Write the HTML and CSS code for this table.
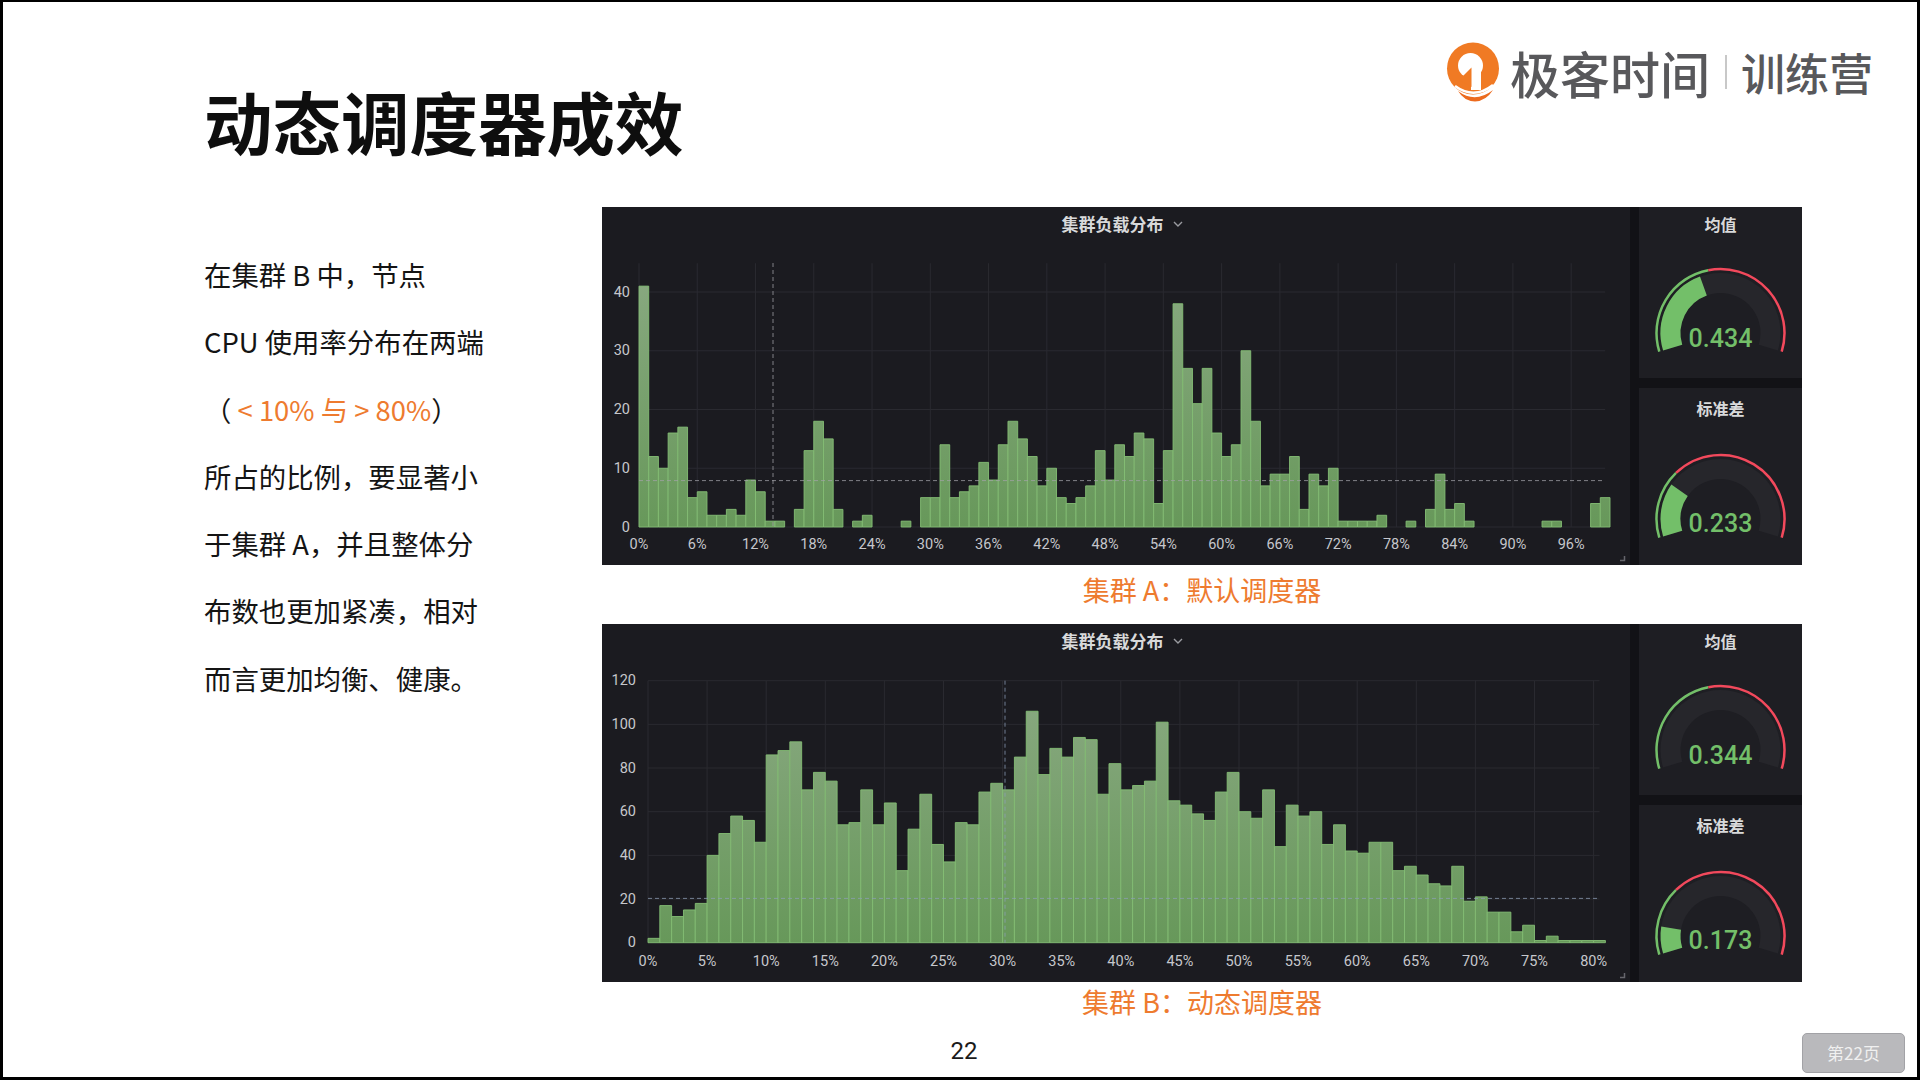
FILE: index.html
```html
<!DOCTYPE html>
<html lang="zh-CN">
<head>
<meta charset="utf-8">
<title>动态调度器成效</title>
<link rel="stylesheet" href="styles.css">
</head>
<body>
<div class="page">
  <header class="header">
    <h1 class="title">动态调度器成效</h1>
    <div class="logo">
      <svg class="logo-icon" width="54" height="60" viewBox="0 0 54 60">
        <path d="M13 49 Q30 62 48 48 Q41 59 30 59.5 Q19 59 13 49 Z" fill="#ec6b1e"/>
        <circle cx="28" cy="26.5" r="26" fill="#f07a24"/>
        <path d="M10 44 Q29 58 48 43" fill="none" stroke="#fff" stroke-width="2.6"/>
        <circle cx="25.5" cy="23.5" r="12.5" fill="#fff"/>
        <rect x="26" y="24" width="10" height="24" fill="#fff"/>
        <polygon points="14,38 26.5,25.5 26.5,45" fill="#f07a24"/>
      </svg>
      <span class="logo-name">极客时间</span>
      <span class="logo-sep"></span>
      <span class="logo-sub">训练营</span>
    </div>
  </header>

  <main class="content">
    <div class="desc">
      <p>在集群 B 中，节点</p>
      <p>CPU 使用率分布在两端</p>
      <p>（<span class="hl"> &lt; 10% 与 &gt; 80%</span>）</p>
      <p>所占的比例，要显著小</p>
      <p>于集群 A，并且整体分</p>
      <p>布数也更加紧凑，相对</p>
      <p>而言更加均衡、健康。</p>
    </div>

    <div class="charts">
      <section class="dash">
        <div class="hist">
          <div class="hist-title">集群负载分布<svg class="chev" width="10" height="6" viewBox="0 0 10 6"><polyline points="1,1 5,5 9,1"/></svg></div>
          <svg class="plot" width="1028" height="325" viewBox="0 0 1028 325">
            <defs>
              <linearGradient id="barA" gradientUnits="userSpaceOnUse" x1="0" y1="0" x2="0" y2="45">
                <stop offset="0" stop-color="#67985a"/>
                <stop offset="1" stop-color="#8aa982"/>
              </linearGradient>
            </defs>
            <g transform="translate(37 287) scale(9.71 -5.875)">
              <path class="grid" d="M0 0H99.5M0 10H99.5M0 20H99.5M0 30H99.5M0 40H99.5M0 0V44.9M6 0V44.9M12 0V44.9M18 0V44.9M24 0V44.9M30 0V44.9M36 0V44.9M42 0V44.9M48 0V44.9M54 0V44.9M60 0V44.9M66 0V44.9M72 0V44.9M78 0V44.9M84 0V44.9M90 0V44.9M96 0V44.9"/>
              <g class="bars bars-a">
                <rect x="0" width="1" height="41"/><rect x="1" width="1" height="12"/><rect x="2" width="1" height="10"/><rect x="3" width="1" height="16"/><rect x="4" width="1" height="17"/>
                <rect x="5" width="1" height="5"/><rect x="6" width="1" height="6"/><rect x="7" width="1" height="2"/><rect x="8" width="1" height="2"/><rect x="9" width="1" height="3"/>
                <rect x="10" width="1" height="2"/><rect x="11" width="1" height="8"/><rect x="12" width="1" height="6"/><rect x="13" width="1" height="1"/><rect x="14" width="1" height="1"/>
                <rect x="16" width="1" height="3"/><rect x="17" width="1" height="13"/><rect x="18" width="1" height="18"/><rect x="19" width="1" height="15"/><rect x="20" width="1" height="3"/>
                <rect x="22" width="1" height="1"/><rect x="23" width="1" height="2"/><rect x="27" width="1" height="1"/>
                <rect x="29" width="1" height="5"/><rect x="30" width="1" height="5"/><rect x="31" width="1" height="14"/><rect x="32" width="1" height="5"/><rect x="33" width="1" height="6"/>
                <rect x="34" width="1" height="7"/><rect x="35" width="1" height="11"/><rect x="36" width="1" height="8"/><rect x="37" width="1" height="14"/><rect x="38" width="1" height="18"/>
                <rect x="39" width="1" height="15"/><rect x="40" width="1" height="12"/><rect x="41" width="1" height="7"/><rect x="42" width="1" height="10"/><rect x="43" width="1" height="5"/>
                <rect x="44" width="1" height="4"/><rect x="45" width="1" height="5"/><rect x="46" width="1" height="7"/><rect x="47" width="1" height="13"/><rect x="48" width="1" height="8"/>
                <rect x="49" width="1" height="14"/><rect x="50" width="1" height="12"/><rect x="51" width="1" height="16"/><rect x="52" width="1" height="15"/><rect x="53" width="1" height="4"/>
                <rect x="54" width="1" height="13"/><rect x="55" width="1" height="38"/><rect x="56" width="1" height="27"/><rect x="57" width="1" height="21"/><rect x="58" width="1" height="27"/>
                <rect x="59" width="1" height="16"/><rect x="60" width="1" height="12"/><rect x="61" width="1" height="14"/><rect x="62" width="1" height="30"/><rect x="63" width="1" height="18"/>
                <rect x="64" width="1" height="7"/><rect x="65" width="1" height="9"/><rect x="66" width="1" height="9"/><rect x="67" width="1" height="12"/><rect x="68" width="1" height="3"/>
                <rect x="69" width="1" height="9"/><rect x="70" width="1" height="7"/><rect x="71" width="1" height="10"/><rect x="72" width="1" height="1"/><rect x="73" width="1" height="1"/>
                <rect x="74" width="1" height="1"/><rect x="75" width="1" height="1"/><rect x="76" width="1" height="2"/><rect x="79" width="1" height="1"/>
                <rect x="81" width="1" height="3"/><rect x="82" width="1" height="9"/><rect x="83" width="1" height="3"/><rect x="84" width="1" height="4"/><rect x="85" width="1" height="1"/>
                <rect x="93" width="1" height="1"/><rect x="94" width="1" height="1"/><rect x="98" width="1" height="4"/><rect x="99" width="1" height="5"/>
              </g>
            </g>
            <line class="dash-line" x1="37" x2="1003" y1="240.6" y2="240.6"/>
            <line class="dash-line" x1="171" x2="171" y1="23" y2="287"/>
            <g class="axis y-axis">
              <text x="28" y="287">0</text><text x="28" y="228.25">10</text><text x="28" y="169.5">20</text><text x="28" y="110.75">30</text><text x="28" y="52">40</text>
            </g>
            <g class="axis x-axis">
              <text x="37" y="304">0%</text><text x="95.26" y="304">6%</text><text x="153.52" y="304">12%</text><text x="211.78" y="304">18%</text>
              <text x="270.04" y="304">24%</text><text x="328.3" y="304">30%</text><text x="386.56" y="304">36%</text><text x="444.82" y="304">42%</text>
              <text x="503.08" y="304">48%</text><text x="561.34" y="304">54%</text><text x="619.6" y="304">60%</text><text x="677.86" y="304">66%</text>
              <text x="736.12" y="304">72%</text><text x="794.38" y="304">78%</text><text x="852.64" y="304">84%</text><text x="910.9" y="304">90%</text>
              <text x="969.16" y="304">96%</text>
            </g>
            <path class="corner" d="M1018 320.5H1022.5V316"/>
          </svg>
        </div>
        <div class="gauges">
          <div class="gauge">
            <svg width="163" height="171" viewBox="0 0 163 171">
              <text class="g-title" x="81.5" y="17">均值</text>
              <path class="g-bg" d="M33.68 140.62A50 50 0 1 1 129.32 140.62"/>
              <path class="g-fill" d="M33.68 140.62A50 50 0 0 1 64.40 79.01"/>
              <path class="g-ok" d="M20.30 144.71A64 64 0 0 1 69.29 63.18"/>
              <path class="g-bad" d="M69.29 63.18A64 64 0 0 1 142.70 144.71"/>
              <text class="g-val" x="81.5" y="139.5">0.434</text>
            </svg>
          </div>
          <div class="gauge">
            <svg width="163" height="177" viewBox="0 0 163 177">
              <text class="g-title" x="81.5" y="20">标准差</text>
              <path class="g-bg" d="M33.68 145.62A50 50 0 1 1 129.32 145.62"/>
              <path class="g-fill" d="M33.68 145.62A50 50 0 0 1 40.54 102.32"/>
              <path class="g-ok" d="M20.30 149.71A64 64 0 0 1 37.04 84.96"/>
              <path class="g-bad" d="M37.04 84.96A64 64 0 0 1 142.70 149.71"/>
              <text class="g-val" x="81.5" y="143.5">0.233</text>
            </svg>
          </div>
        </div>
      </section>
      <p class="caption caption-a">集群 A：默认调度器</p>

      <section class="dash">
        <div class="hist">
          <div class="hist-title">集群负载分布<svg class="chev" width="10" height="6" viewBox="0 0 10 6"><polyline points="1,1 5,5 9,1"/></svg></div>
          <svg class="plot" width="1028" height="325" viewBox="0 0 1028 325">
            <defs>
              <linearGradient id="barB" gradientUnits="userSpaceOnUse" x1="0" y1="0" x2="0" y2="120">
                <stop offset="0" stop-color="#67985a"/>
                <stop offset="1" stop-color="#8aa982"/>
              </linearGradient>
            </defs>
            <g transform="translate(46 285.7) scale(11.82 -2.1835)">
              <path class="grid" d="M0 0H80.5M0 20H80.5M0 40H80.5M0 60H80.5M0 80H80.5M0 100H80.5M0 120H80.5M0 0V120M5 0V120M10 0V120M15 0V120M20 0V120M25 0V120M30 0V120M35 0V120M40 0V120M45 0V120M50 0V120M55 0V120M60 0V120M65 0V120M70 0V120M75 0V120M80 0V120"/>
              <g class="bars bars-b">
                <rect x="0" width="1" height="2"/><rect x="1" width="1" height="17"/><rect x="2" width="1" height="12"/><rect x="3" width="1" height="15"/><rect x="4" width="1" height="18"/>
                <rect x="5" width="1" height="40"/><rect x="6" width="1" height="50"/><rect x="7" width="1" height="58"/><rect x="8" width="1" height="56"/><rect x="9" width="1" height="46"/>
                <rect x="10" width="1" height="86"/><rect x="11" width="1" height="88"/><rect x="12" width="1" height="92"/><rect x="13" width="1" height="70"/><rect x="14" width="1" height="78"/>
                <rect x="15" width="1" height="74"/><rect x="16" width="1" height="54"/><rect x="17" width="1" height="55"/><rect x="18" width="1" height="70"/><rect x="19" width="1" height="54"/>
                <rect x="20" width="1" height="64"/><rect x="21" width="1" height="33"/><rect x="22" width="1" height="52"/><rect x="23" width="1" height="68"/><rect x="24" width="1" height="45"/>
                <rect x="25" width="1" height="37"/><rect x="26" width="1" height="55"/><rect x="27" width="1" height="54"/><rect x="28" width="1" height="69"/><rect x="29" width="1" height="73"/>
                <rect x="30" width="1" height="70"/><rect x="31" width="1" height="85"/><rect x="32" width="1" height="106"/><rect x="33" width="1" height="77"/><rect x="34" width="1" height="89"/>
                <rect x="35" width="1" height="85"/><rect x="36" width="1" height="94"/><rect x="37" width="1" height="93"/><rect x="38" width="1" height="68"/><rect x="39" width="1" height="82"/>
                <rect x="40" width="1" height="70"/><rect x="41" width="1" height="72"/><rect x="42" width="1" height="74"/><rect x="43" width="1" height="101"/><rect x="44" width="1" height="65"/>
                <rect x="45" width="1" height="63"/><rect x="46" width="1" height="59"/><rect x="47" width="1" height="56"/><rect x="48" width="1" height="69"/><rect x="49" width="1" height="78"/>
                <rect x="50" width="1" height="60"/><rect x="51" width="1" height="57"/><rect x="52" width="1" height="70"/><rect x="53" width="1" height="44"/><rect x="54" width="1" height="63"/>
                <rect x="55" width="1" height="58"/><rect x="56" width="1" height="60"/><rect x="57" width="1" height="45"/><rect x="58" width="1" height="54"/><rect x="59" width="1" height="42"/>
                <rect x="60" width="1" height="41"/><rect x="61" width="1" height="46"/><rect x="62" width="1" height="46"/><rect x="63" width="1" height="33"/><rect x="64" width="1" height="35"/>
                <rect x="65" width="1" height="31"/><rect x="66" width="1" height="27"/><rect x="67" width="1" height="26"/><rect x="68" width="1" height="35"/><rect x="69" width="1" height="19"/>
                <rect x="70" width="1" height="21"/><rect x="71" width="1" height="14"/><rect x="72" width="1" height="14"/><rect x="73" width="1" height="5"/><rect x="74" width="1" height="8"/>
                <rect x="75" width="1" height="1"/><rect x="76" width="1" height="3"/><rect x="77" width="1" height="1"/><rect x="78" width="1" height="1"/><rect x="79" width="1" height="1"/>
                <rect x="80" width="1" height="1"/>
              </g>
            </g>
            <line class="dash-line dash-blue" x1="46" x2="998" y1="241.4" y2="241.4"/>
            <line class="dash-line dash-blue" x1="403" x2="403" y1="23.7" y2="285.7"/>
            <g class="axis y-axis">
              <text x="34" y="285.7">0</text><text x="34" y="242.03">20</text><text x="34" y="198.36">40</text><text x="34" y="154.69">60</text>
              <text x="34" y="111.02">80</text><text x="34" y="67.35">100</text><text x="34" y="23.68">120</text>
            </g>
            <g class="axis x-axis">
              <text x="46" y="304.7">0%</text><text x="105.1" y="304.7">5%</text><text x="164.2" y="304.7">10%</text><text x="223.3" y="304.7">15%</text>
              <text x="282.4" y="304.7">20%</text><text x="341.5" y="304.7">25%</text><text x="400.6" y="304.7">30%</text><text x="459.7" y="304.7">35%</text>
              <text x="518.8" y="304.7">40%</text><text x="577.9" y="304.7">45%</text><text x="637" y="304.7">50%</text><text x="696.1" y="304.7">55%</text>
              <text x="755.2" y="304.7">60%</text><text x="814.3" y="304.7">65%</text><text x="873.4" y="304.7">70%</text><text x="932.5" y="304.7">75%</text>
              <text x="991.6" y="304.7">80%</text>
            </g>
            <path class="corner" d="M1018 320.5H1022.5V316"/>
          </svg>
        </div>
        <div class="gauges">
          <div class="gauge">
            <svg width="163" height="171" viewBox="0 0 163 171">
              <text class="g-title" x="81.5" y="17">均值</text>
              <path class="g-bg" d="M33.68 140.62A50 50 0 1 1 129.32 140.62"/>
              <path class="g-ok" d="M20.30 144.71A64 64 0 0 1 69.29 63.18"/>
              <path class="g-bad" d="M69.29 63.18A64 64 0 0 1 142.70 144.71"/>
              <text class="g-val" x="81.5" y="139.5">0.344</text>
            </svg>
          </div>
          <div class="gauge">
            <svg width="163" height="177" viewBox="0 0 163 177">
              <text class="g-title" x="81.5" y="20">标准差</text>
              <path class="g-bg" d="M33.68 145.62A50 50 0 1 1 129.32 145.62"/>
              <path class="g-fill" d="M33.68 145.62A50 50 0 0 1 32.11 123.18"/>
              <path class="g-ok" d="M20.30 149.71A64 64 0 0 1 37.04 84.96"/>
              <path class="g-bad" d="M37.04 84.96A64 64 0 0 1 142.70 149.71"/>
              <text class="g-val" x="81.5" y="143.5">0.173</text>
            </svg>
          </div>
        </div>
      </section>
      <p class="caption caption-b">集群 B：动态调度器</p>
    </div>
  </main>

  <footer class="pageno">22</footer>
  <button class="page-btn" type="button">第22页</button>
</div>
</body>
</html>
```

FILE: styles.css
```css
* { box-sizing: border-box; }

html, body {
  margin: 0;
  padding: 0;
  background: #ffffff;
}

body {
  font-family: "Noto Sans CJK SC", "Noto Sans", sans-serif;
  color: #111111;
}

.page {
  position: relative;
  width: 1920px;
  height: 1080px;
  overflow: hidden;
  background: #ffffff;
}

.page::after {
  content: "";
  position: absolute;
  inset: 0;
  border-style: solid;
  border-color: #000;
  border-width: 2px 3px 3px 3px;
  pointer-events: none;
}

/* Header */
.header {
  display: flex;
  justify-content: space-between;
  align-items: flex-start;
  padding: 0 47px 0 204px;
}

.title {
  margin: 87px 0 0;
  font-size: 68.5px;
  line-height: 68px;
  font-weight: 700;
  color: #0e0e0e;
  letter-spacing: 0;
}

.logo {
  margin-top: 42px;
  height: 60px;
  display: flex;
  align-items: center;
}

.logo-icon { display: block; flex: none; }

.logo-name {
  margin-left: 11px;
  font-size: 50px;
  line-height: 60px;
  font-weight: 500;
  color: #58585b;
  white-space: nowrap;
}

.logo-sep {
  margin-left: 15px;
  width: 2px;
  height: 34px;
  background: #c8c8c8;
}

.logo-sub {
  margin-left: 14px;
  font-size: 44px;
  line-height: 60px;
  font-weight: 500;
  color: #58585b;
  white-space: nowrap;
}

/* Content */
.content {
  display: flex;
  align-items: flex-start;
  padding-left: 204px;
}

.desc {
  width: 398px;
  flex: none;
  margin-top: 86px;
}

.desc p {
  margin: 0;
  font-size: 27.4px;
  line-height: 67.3px;
  color: #141414;
  white-space: nowrap;
}

.hl { color: #ee7b2f; }

.charts {
  width: 1200px;
  flex: none;
  margin-top: 52px;
}

.dash {
  display: grid;
  grid-template-columns: 1028px 163px;
  column-gap: 9px;
  height: 358px;
  background: #121216;
}

.hist {
  background: #1b1b20;
  display: flex;
  flex-direction: column;
}

.hist-title {
  height: 33px;
  line-height: 33px;
  padding-left: 12px;
  text-align: center;
  font-size: 17px;
  font-weight: 700;
  color: #d8d9da;
  white-space: nowrap;
}

.chev {
  margin-left: 9px;
  vertical-align: middle;
  position: relative;
  top: -2px;
}

.chev polyline {
  fill: none;
  stroke: #9a9ba0;
  stroke-width: 1.4;
}

.plot { display: block; }

.grid {
  fill: none;
  stroke: #2a2a30;
  stroke-width: 1;
  vector-effect: non-scaling-stroke;
}

.bars rect {
  stroke: #84be74;
  stroke-width: 1;
  stroke-opacity: 0.9;
  vector-effect: non-scaling-stroke;
}

.bars-a rect { fill: url(#barA); }
.bars-b rect { fill: url(#barB); }

.dash-line {
  stroke: #a3a3a8;
  stroke-width: 1;
  stroke-dasharray: 4 3;
  opacity: 0.75;
}

.dash-blue { stroke: #8e9fb8; }

.axis text {
  font-family: Roboto, "Liberation Sans", sans-serif;
  font-size: 14.5px;
  fill: #c6c7cc;
  dominant-baseline: central;
}

.y-axis text { text-anchor: end; }
.x-axis text { text-anchor: middle; }

.corner {
  fill: none;
  stroke: #66666c;
  stroke-width: 1.5;
}

.gauges {
  display: grid;
  grid-template-rows: 171px 177px;
  row-gap: 10px;
}

.gauge {
  background: #1e1e23;
}

.gauge svg { display: block; }

.g-title {
  font-family: "Noto Sans CJK SC", sans-serif;
  font-size: 16px;
  font-weight: 700;
  fill: #d8d9da;
  text-anchor: middle;
  dominant-baseline: central;
}

.g-val {
  font-family: Roboto, "Liberation Sans", sans-serif;
  font-size: 25px;
  font-weight: 500;
  fill: #73bf69;
  text-anchor: middle;
}

.g-bg {
  fill: none;
  stroke: #26262b;
  stroke-width: 20;
}

.g-fill {
  fill: none;
  stroke: #73bf69;
  stroke-width: 20;
}

.g-ok {
  fill: none;
  stroke: #73bf69;
  stroke-width: 2.5;
}

.g-bad {
  fill: none;
  stroke: #f2495c;
  stroke-width: 2.5;
}

.caption {
  margin: 0;
  height: 40px;
  font-size: 27px;
  line-height: 40px;
  text-align: center;
  color: #ee7b2f;
  white-space: nowrap;
}

.caption-a { margin: 5px 0 14px; }
.caption-b { margin: 0; }

/* Footer */
.pageno {
  margin-top: 14px;
  padding-left: 8px;
  height: 30px;
  line-height: 30px;
  text-align: center;
  font-family: Roboto, "Liberation Sans", sans-serif;
  font-size: 24px;
  color: #1a1a1a;
}

.page-btn {
  position: absolute;
  right: 15px;
  bottom: 7px;
  width: 103px;
  height: 40px;
  padding: 0;
  border: 1px solid #a2a2a6;
  border-radius: 5px;
  background: #b9b9bc;
  color: #f0f0f0;
  font-family: "Noto Sans CJK SC", sans-serif;
  font-size: 17px;
  line-height: 38px;
  text-align: center;
}
```
